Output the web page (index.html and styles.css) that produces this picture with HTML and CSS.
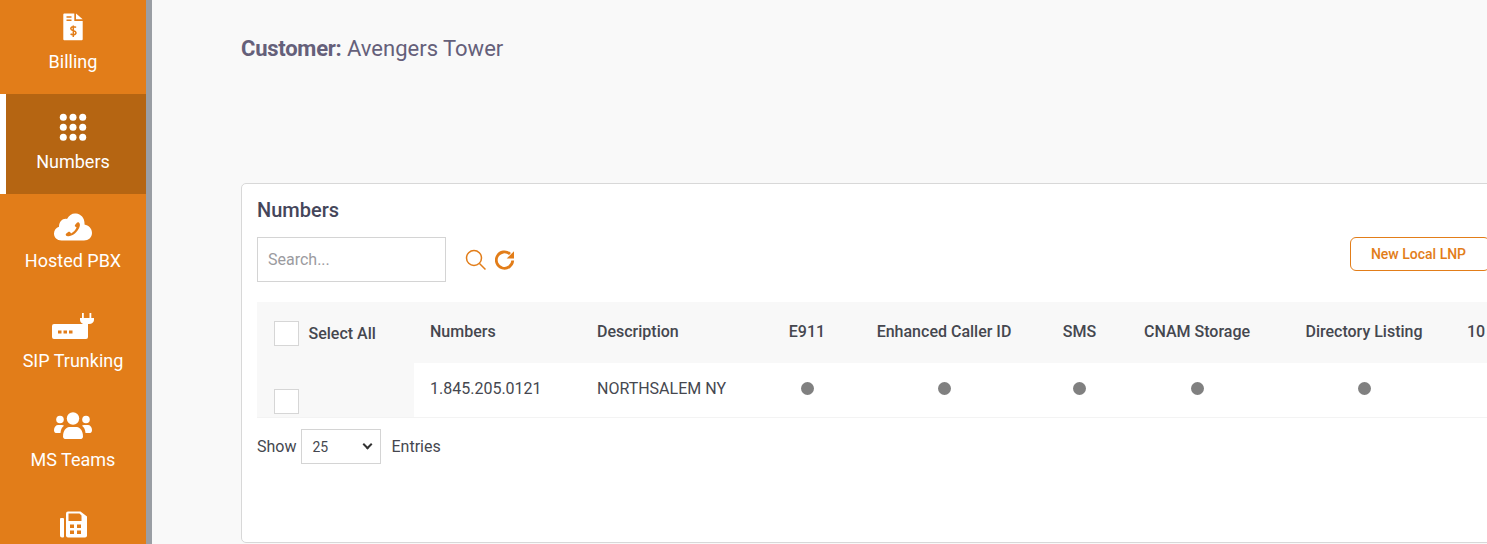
FILE: index.html
```html
<!DOCTYPE html>
<html lang="en">
<head>
<meta charset="utf-8">
<title>Numbers</title>
<link rel="stylesheet" href="styles.css">
</head>
<body>
<div class="page">
  <nav class="sidebar">
    <a class="nav-item">
      <svg class="nav-icon" width="40" height="30" viewBox="0 0 40 30"><path class="w" d="M10.300 2.600a1 1 0 0 1 1-1h10v7.500h8.400v18.200a1 1 0 0 1-1 1H11.300a1 1 0 0 1-1-1z"/><path class="w" d="M23 1.600l6.700 5.700H23z"/><path class="os" d="M13.500 5h5M13.500 8.300h5"/><path class="os" d="M23 15.500c-1-1.200-5.200-1.200-5.200 1.300 0 2.600 5.200 1.400 5.200 4 0 2.400-4.200 2.400-5.400 1M20.300 13.500v11.500"/></svg>
      <span class="nav-label">Billing</span>
    </a>
    <a class="nav-item active">
      <svg class="nav-icon" width="40" height="30" viewBox="0 0 40 30"><g class="w"><circle cx="10.300" cy="5.300" r="3.500"/><circle cx="20" cy="5.300" r="3.500"/><circle cx="29.700" cy="5.300" r="3.500"/><circle cx="10.300" cy="15.300" r="3.500"/><circle cx="20" cy="15.300" r="3.500"/><circle cx="29.700" cy="15.300" r="3.500"/><circle cx="10.300" cy="25.300" r="3.500"/><circle cx="20" cy="25.300" r="3.500"/><circle cx="29.700" cy="25.300" r="3.500"/></g></svg>
      <span class="nav-label">Numbers</span>
    </a>
    <a class="nav-item">
      <svg class="nav-icon" width="40" height="30" viewBox="0 0 40 30"><path class="w" d="M8.500 28.500C4 28.500 1 25.300 1 21.500c0-3.200 2-5.800 5-6.800C6 9.500 10 6 14 7c2-4 5.500-6 9-5.500 5 .5 8.500 4.500 8.500 9.500v1.500c4 .7 7.500 4 7.500 8.500s-3.500 7.500-8 7.500z"/><path class="o" d="M13.200 23.800c-.8-.8-.5-1.600.1-2.200l1.900-1.600c.6-.5 1.300-.4 1.800.1l1.100 1.300c2.400-1.200 4.400-3.300 5.500-5.800l-1.300-1.100c-.6-.5-.6-1.200-.1-1.800l1.700-1.900c.6-.6 1.400-.7 2.200 0 1.200 1.100 1 3.100.1 5-2 4.400-5.600 7.400-9.300 8.100-1.600.4-2.700.6-3.700-.1z"/></svg>
      <span class="nav-label">Hosted PBX</span>
    </a>
    <a class="nav-item">
      <svg class="nav-icon" width="44" height="30" viewBox="0 0 44 30"><path class="w" d="M3 13h29v-2h5v15a2 2 0 0 1-2 2H3a2 2 0 0 1-2-2V15a2 2 0 0 1 2-2z"/><path class="o" d="M7 19.500h3.500v3H7zM12.500 19.500H16v3h-3.500zM18 19.500h3.500v3H18z"/><path class="w" d="M29 7h14v2c0 2-2 4-5 4h-5c-2 0-4-2-4-4z"/><path class="w" d="M31 2h1.800v6H31zM38.500 2h1.800v6h-1.800z"/></svg>
      <span class="nav-label">SIP Trunking</span>
    </a>
    <a class="nav-item">
      <svg class="nav-icon" width="40" height="30" viewBox="0 0 40 30"><g class="w"><circle cx="20" cy="7.500" r="6.200"/><circle cx="7" cy="8.500" r="3.800"/><circle cx="33" cy="8.500" r="3.800"/><path d="M10 25.500c0-6 3.500-9.500 6-9.500h8c2.500 0 6 3.500 6 9.500 0 1.500-1 2.500-2 2.500H12c-1 0-2-1-2-2.500z"/><path d="M1 19c0-3 2-5 4-5h4c.8 0 1.500.3 2 .8-2 1.500-3.200 3.700-3.500 7.200H3c-1.500 0-2-1.500-2-3z"/><path d="M39 19c0-3-2-5-4-5h-4c-.8 0-1.500.3-2 .8 2 1.500 3.200 3.700 3.500 7.200H37c1.500 0 2-1.500 2-3z"/></g></svg>
      <span class="nav-label">MS Teams</span>
    </a>
    <a class="nav-item">
      <svg class="nav-icon" width="40" height="30" viewBox="0 0 40 30"><path class="w" d="M8 8h2a1 1 0 0 1 1 1v17.500a1 1 0 0 1-1 1H9a2 2 0 0 1-2-2V9a1 1 0 0 1 1-1z"/><path class="w" d="M15 1.500h12.500l6.500 5v19a2 2 0 0 1-2 2H15a2 2 0 0 1-2-2v-22a2 2 0 0 1 2-2z"/><path class="o" d="M15.500 3.500h11l2 2v5.500h-13zM17 14.500h4v3.500h-4zM24 14.500h4v3.500h-4zM17 20.500h4v3.500h-4zM24 20.500h4v3.500h-4z"/></svg>
    </a>
  </nav>
  <div class="divider"></div>
  <main class="main">
    <h1 class="customer"><strong>Customer:</strong> Avengers Tower</h1>
    <section class="card">
      <h2 class="card-title">Numbers</h2>
      <div class="toolbar">
        <input class="search" type="text" placeholder="Search...">
        <svg class="tool-icon" width="22" height="22" viewBox="0 0 22 22"><circle class="ol" cx="9" cy="9" r="7.500"/><path class="ol" d="M14.500 14.500l6 6"/></svg>
        <svg class="tool-icon" width="22" height="22" viewBox="0 0 22 22"><path class="ol2" d="M15 5A8.200 8.200 0 1 0 17.700 11.500"/><path class="of" d="M19 2.200v7.300h-7.300z"/></svg>
        <button class="new-btn" type="button">New Local LNP</button>
      </div>
      <div class="table-wrap">
        <table class="grid">
          <colgroup>
            <col class="c-sel"><col class="c-num"><col class="c-desc"><col class="c-e911"><col class="c-ecid"><col class="c-sms"><col class="c-cnam"><col class="c-dir"><col class="c-ten">
          </colgroup>
          <thead>
            <tr>
              <th class="sel-head"><span class="sel-wrap"><input class="check" type="checkbox"><span>Select All</span></span></th>
              <th class="left">Numbers</th>
              <th class="left">Description</th>
              <th>E911</th>
              <th>Enhanced Caller ID</th>
              <th>SMS</th>
              <th>CNAM Storage</th>
              <th>Directory Listing</th>
              <th class="left ten">10</th>
            </tr>
          </thead>
          <tbody>
            <tr>
              <td class="sel-cell"><input class="check" type="checkbox"></td>
              <td class="left">1.845.205.0121</td>
              <td class="left">NORTHSALEM NY</td>
              <td><span class="dot"></span></td>
              <td><span class="dot"></span></td>
              <td><span class="dot"></span></td>
              <td><span class="dot"></span></td>
              <td><span class="dot"></span></td>
              <td></td>
            </tr>
          </tbody>
        </table>
      </div>
      <div class="entries">
        <span>Show</span>
        <span class="select-wrap"><select class="select"><option>25</option><option>50</option></select></span>
        <span>Entries</span>
      </div>
    </section>
  </main>
</div>
</body>
</html>
```

FILE: styles.css
```css
* { box-sizing: border-box; }
html, body { margin: 0; height: 544px; overflow: hidden; }
body { font-family: Roboto, "Liberation Sans", sans-serif; font-size: 16px; color: #45474f; background: #f9f9f9; }
.page { display: flex; width: 1487px; height: 544px; overflow: hidden; }
.sidebar { flex: 0 0 146px; width: 146px; background: #e27d19; margin-top: -5.6px; height: 560px; overflow: hidden; }
.nav-item { display: flex; flex-direction: column; align-items: center; height: 99.6px; padding-top: 18px; color: #fff; border-left: 6px solid transparent; }
.nav-item.active { background: #b56512; border-left-color: #fff; }
.nav-icon { display: block; flex: none; margin-left: -6px; }
.nav-label { font-size: 18px; line-height: 22px; margin-top: 8.6px; margin-left: -6px; white-space: nowrap; }
.w { fill: #fff; }
.o { fill: #e27d19; }
.os { fill: none; stroke: #e27d19; stroke-width: 1.500; }
.active .o { fill: #b56512; }
.divider { flex: 0 0 6px; background: #9a9ea4; }
.main { flex: 1 1 auto; min-width: 0; padding: 36px 0 0 89px; overflow: hidden; }
.customer { margin: 0; height: 147px; font-size: 22px; line-height: 25px; font-weight: 400; color: #65607a; }
.customer strong { font-weight: 700; letter-spacing: -0.25px; }
.card { width: 1400px; height: 360px; background: #fff; border: 1px solid #d8d8d8; border-radius: 5px; padding: 14px 15px 0; }
.card-title { margin: 0; font-size: 20px; line-height: 24px; font-weight: 500; color: #45465a; }
.toolbar { display: flex; align-items: center; margin-top: 15px; height: 45px; }
.search { width: 189px; height: 45px; border: 1px solid #d4d4d4; background: #fff; padding: 0 10px; font: 16px Roboto, sans-serif; color: #45474f; outline: none; }
.search::placeholder { color: #9b9ba0; opacity: 1; }
.tool-icon { flex: none; margin-left: 8px; }
.tool-icon:first-of-type { margin-left: 19px; }
.ol { fill: none; stroke: #e27d19; stroke-width: 1.500; }
.ol2 { fill: none; stroke: #e27d19; stroke-width: 2.800; }
.of { fill: #e27d19; }
.new-btn { align-self: flex-start; margin-left: 833px; width: 140px; height: 34px; background: #fff; border: 1px solid #e27d19; border-radius: 6px; color: #e27d19; font: 500 14px Roboto, sans-serif; padding: 0 3px 0 0; }
.table-wrap { margin-top: 20px; }
.grid { border-collapse: collapse; table-layout: fixed; width: 1300px; }
.c-sel { width: 157px; } .c-num { width: 167px; } .c-desc { width: 192px; } .c-e911 { width: 68px; } .c-ecid { width: 206px; } .c-sms { width: 65px; } .c-cnam { width: 170px; } .c-dir { width: 164px; } .c-ten { width: 111px; }
.grid th { height: 61px; background: #f8f8f8; font-weight: 500; font-size: 16px; text-align: center; padding: 0 0 2px; color: #45474f; white-space: nowrap; }
.grid td { height: 54px; text-align: center; padding: 0 0 2px; border-bottom: 1px solid #f3f3f3; color: #45474f; white-space: nowrap; }
.grid .left { text-align: left; padding-left: 16px; }
.grid .ten { padding-left: 21px; }
.grid .sel-head { text-align: left; padding: 2px 0 0 17px; }
.sel-wrap { display: flex; align-items: center; gap: 9.5px; }
.grid .sel-cell { background: #f8f8f8; text-align: left; padding: 0 0 3px 17px; vertical-align: bottom; }
.check { appearance: none; display: block; margin: 0; width: 25px; height: 25px; background: #fff; border: 1px solid #d6d6d6; flex: none; }
.dot { display: block; width: 13px; height: 13px; border-radius: 50%; background: #808080; margin: 0 auto; }
.entries { display: flex; align-items: center; height: 34px; margin-top: 12px; }
.select-wrap { position: relative; display: block; margin: 0 10px 0 5px; }
.select-wrap::after { content: ""; position: absolute; right: 10px; top: 12px; width: 5px; height: 5px; border: solid #333; border-width: 0 2px 2px 0; transform: rotate(45deg); }
.select { appearance: none; display: block; width: 80px; height: 35px; padding: 0 10px; background: #fff; border: 1px solid #d4d4d4; border-radius: 0; font: 14px Roboto, sans-serif; color: #45474f; }
```
